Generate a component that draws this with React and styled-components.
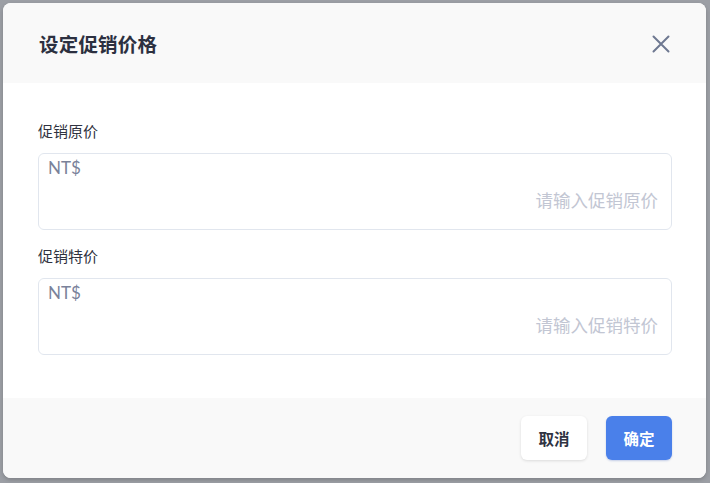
import React from "react";
import styled, { createGlobalStyle } from "styled-components";

const GlobalStyle = createGlobalStyle`
  html, body { margin: 0; padding: 0; }
  body {
    background: #9c9fa5;
    font-family: "Noto Sans CJK SC", "Noto Sans", sans-serif;
  }
  * { box-sizing: border-box; }
`;

const Backdrop = styled.div`
  width: 710px;
  height: 483px;
  padding: 3px 4px 5px 3px;
  background: #9c9fa5;
`;

const Modal = styled.div`
  width: 703px;
  height: 475px;
  display: flex;
  flex-direction: column;
  border-radius: 8px;
  overflow: hidden;
  background: #ffffff;
  box-shadow: 0 2px 4px rgba(0, 0, 0, 0.18);
`;

const Header = styled.div`
  height: 80px;
  flex: none;
  display: flex;
  align-items: center;
  justify-content: space-between;
  padding: 0 35px 0 36px;
  background: #f9f9f9;
`;

const Title = styled.h2`
  margin: 0;
  font-size: 19.5px;
  font-weight: 700;
  color: #2c3040;
  letter-spacing: 0.2px;
`;

const CloseButton = styled.button`
  width: 20px;
  height: 20px;
  padding: 0;
  border: 0;
  background: transparent;
  display: flex;
  align-items: center;
  justify-content: center;
  cursor: pointer;
  margin-top: 1px;
`;

const Body = styled.div`
  flex: 1;
  display: flex;
  flex-direction: column;
  padding: 38px 34px 0 35px;
`;

const Field = styled.div`
  display: flex;
  flex-direction: column;
  margin-bottom: ${(p) => p.$gap}px;
`;

const Label = styled.label`
  font-size: 15px;
  line-height: 20px;
  color: #2f3240;
  margin-bottom: 12px;
`;

const InputBox = styled.div`
  height: 77px;
  display: flex;
  flex-direction: column;
  justify-content: space-between;
  border: 1px solid #e1e6ee;
  border-radius: 6px;
  padding: 2px 13px 17px 9px;
  background: #fff;
`;

const Prefix = styled.span`
  font-family: Lato, "Noto Sans", sans-serif;
  font-size: 17px;
  line-height: 24px;
  color: #7a829a;
`;

const AmountInput = styled.input`
  border: 0;
  outline: none;
  padding: 0;
  width: 100%;
  background: transparent;
  text-align: right;
  font-family: "Noto Sans CJK SC", sans-serif;
  font-size: 17.5px;
  line-height: 24px;
  color: #353846;
  &::placeholder { color: #c2c6d3; }
`;

const Footer = styled.div`
  height: 80px;
  flex: none;
  display: flex;
  align-items: center;
  justify-content: flex-end;
  gap: 19px;
  padding: 0 34px 0 0;
  background: #f9f9f9;
`;

const Button = styled.button`
  width: 66px;
  height: 44px;
  border-radius: 6px;
  border: 0;
  font-family: "Noto Sans CJK SC", sans-serif;
  font-size: 15.5px;
  font-weight: 700;
  cursor: pointer;
  background: ${(p) => (p.$primary ? "#4a80ea" : "#ffffff")};
  color: ${(p) => (p.$primary ? "#ffffff" : "#2f3342")};
  box-shadow: ${(p) =>
    p.$primary
      ? "0 1px 2px rgba(40, 80, 180, 0.25)"
      : "0 1px 3px rgba(0, 0, 0, 0.12)"};
`;

const PriceField = ({ label, placeholder, gap }) => (
  <Field $gap={gap}>
    <Label>{label}</Label>
    <InputBox>
      <Prefix>NT$</Prefix>
      <AmountInput placeholder={placeholder} />
    </InputBox>
  </Field>
);

export default function App() {
  return (
    <>
      <GlobalStyle />
      <Backdrop>
        <Modal>
          <Header>
            <Title>设定促销价格</Title>
            <CloseButton aria-label="关闭">
              <svg width="18" height="18" viewBox="0 0 18 18">
                <path
                  d="M1.5 1.5 L16.5 16.5 M16.5 1.5 L1.5 16.5"
                  stroke="#6e7891"
                  strokeWidth="2"
                  strokeLinecap="round"
                />
              </svg>
            </CloseButton>
          </Header>
          <Body>
            <PriceField label="促销原价" placeholder="请输入促销原价" gap={16} />
            <PriceField label="促销特价" placeholder="请输入促销特价" gap={0} />
          </Body>
          <Footer>
            <Button>取消</Button>
            <Button $primary>确定</Button>
          </Footer>
        </Modal>
      </Backdrop>
    </>
  );
}
